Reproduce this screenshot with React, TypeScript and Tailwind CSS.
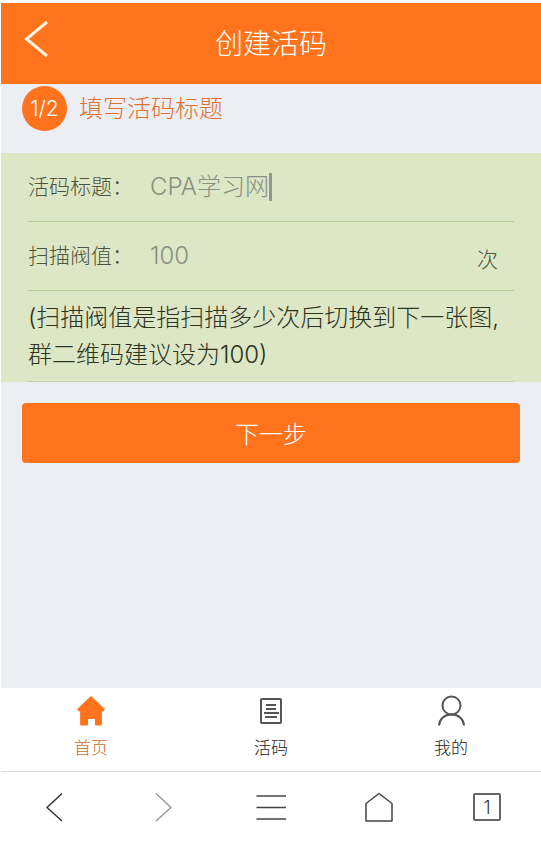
import React, { useState } from 'react';
import clsx from 'clsx';

type TabKey = 'home' | 'codes' | 'mine';

const HomeIcon = () => (
    <svg className="w-8 h-8" viewBox="0 0 32 32" fill="#ff731d" aria-hidden="true">
        <path
            d="M16 2.5 29.5 15.2 28.3 17H26.3V31H20.5V24.5H12.5V31H5.7V17H3.8L2.6 15.2Z"
            stroke="#ff731d"
            strokeWidth="1"
            strokeLinejoin="round"
        />
    </svg>
);

const CodeIcon = () => (
    <svg className="w-8 h-8" viewBox="0 0 32 32" fill="none" stroke="#555" strokeWidth="2" aria-hidden="true">
        <rect x="6" y="5" width="20" height="24" rx="1" />
        <path d="M11 11H21M11 15H21M9 19H24M10 23H22" />
    </svg>
);

const UserIcon = () => (
    <svg className="w-8 h-8" viewBox="0 0 32 32" fill="none" stroke="#555" strokeWidth="2" aria-hidden="true">
        <circle cx="16.5" cy="11.5" r="9" />
        <path d="M4 31.5C4.5 25 9.5 20.5 16.5 20.5S28.5 25 29 31.5" />
    </svg>
);

const tabs: { key: TabKey; label: string; icon: React.ReactNode }[] = [
    { key: 'home', label: '首页', icon: <HomeIcon /> },
    { key: 'codes', label: '活码', icon: <CodeIcon /> },
    { key: 'mine', label: '我的', icon: <UserIcon /> },
];

const browserButtons = [
    { label: '后退', stroke: '#333', path: 'M23 2.5 8 16.5 23 30' },
    { label: '前进', stroke: '#999', path: 'M9 2.5 24 16.5 9 30' },
    { label: '菜单', stroke: '#444', path: 'M1.5 5H31M1.5 16.5H31M1.5 28H31' },
    { label: '主页', stroke: '#444', path: 'M16 2.5 29 12.5V30H3V12.5Z' },
];

const App: React.FC = () => {
    const [title, setTitle] = useState('CPA学习网');
    const [limit, setLimit] = useState('100');
    const [activeTab, setActiveTab] = useState<TabKey>('home');

    return (
        <div className="min-h-screen flex flex-col bg-white pt-[3px] pl-px font-light font-[Inter,'Noto_Sans_CJK_SC',sans-serif]">
            <header className="grid grid-cols-[72px_1fr_72px] items-center h-[81px] bg-[#ff731d] text-white">
                <button type="button" aria-label="返回" className="pl-5 pb-2">
                    <svg className="w-8 h-10" viewBox="0 0 32 40" fill="none" stroke="#fff3df" strokeWidth="3">
                        <path d="M26 2 5.5 19 26 36" />
                    </svg>
                </button>
                <h1 className="text-center text-[28px] leading-10 font-light">创建活码</h1>
            </header>

            <main className="flex-1 bg-[#edeef3]">
                <div className="flex items-start h-[69px] px-[21px] pt-[2px]">
                    <span className="flex items-center justify-center w-[45px] h-[45px] rounded-full bg-[#ff731d] text-white text-[21px]">
                        1/2
                    </span>
                    <h2 className="ml-3 text-[24px] leading-[45px] font-light text-[#dd7232]">填写活码标题</h2>
                </div>

                <form onSubmit={(e) => e.preventDefault()}>
                    <div className="bg-[#dde7c5] px-[27px]">
                        <div className="flex items-center h-[69px] border-b border-[#b5cd93]">
                            <label htmlFor="title" className="w-[122px] text-[21px] text-[#4b5440]">
                                活码标题：
                            </label>
                            <input
                                id="title"
                                type="text"
                                value={title}
                                onChange={(e) => setTitle(e.target.value)}
                                className="field-sizing-content text-[24px] leading-9 text-[#898f82] outline-none"
                            />
                            <span className="w-[3px] h-7 bg-[#94978f]" />
                        </div>

                        <div className="flex items-center h-[69px] border-b border-[#b5cd93]">
                            <label htmlFor="limit" className="w-[122px] text-[21px] text-[#4b5440]">
                                扫描阀值：
                            </label>
                            <input
                                id="limit"
                                type="text"
                                inputMode="numeric"
                                value={limit}
                                onChange={(e) => setLimit(e.target.value)}
                                className="flex-1 min-w-0 text-[24px] leading-9 text-[#898f82] outline-none"
                            />
                            <span className="pr-4 pt-2 text-[21px] text-[#4b5440]">次</span>
                        </div>

                        <p className="py-2 text-[24px] leading-[37px] text-[#2b3321] border-b border-[#c3d2ae]">
                            (扫描阀值是指扫描多少次后切换到下一张图,
                            <br />
                            群二维码建议设为100)
                        </p>
                    </div>

                    <div className="px-[21px] pt-[21px]">
                        <button
                            type="submit"
                            className="w-full h-[60px] pt-1 rounded-sm bg-[#ff731d] text-white text-[24px] font-light"
                        >
                            下一步
                        </button>
                    </div>
                </form>
            </main>

            <nav className="grid grid-cols-3 h-[84px] border-b border-[#dcdcdc]">
                {tabs.map((tab) => (
                    <button
                        key={tab.key}
                        type="button"
                        onClick={() => setActiveTab(tab.key)}
                        className={clsx(
                            'flex flex-col items-center pt-1.5 gap-2.5 text-[17px] leading-6 font-light',
                            activeTab === tab.key ? 'text-[#cf6c24]' : 'text-[#222]'
                        )}
                    >
                        {tab.icon}
                        {tab.label}
                    </button>
                ))}
            </nav>

            {/* Browser toolbar */}
            <div className="grid grid-cols-5 h-[74px] pb-1">
                {browserButtons.map((item) => (
                    <button key={item.label} type="button" aria-label={item.label} className="flex items-center justify-center">
                        <svg className="w-8 h-8" viewBox="0 0 32 32" fill="none" stroke={item.stroke} strokeWidth="1.5" strokeLinejoin="round">
                            <path d={item.path} />
                        </svg>
                    </button>
                ))}
                <button type="button" aria-label="窗口" className="flex items-center justify-center">
                    <span className="flex items-center justify-center w-7 h-7 border-2 border-[#666] rounded-xs text-[18px] text-[#333]">
                        1
                    </span>
                </button>
            </div>
        </div>
    );
};

export default App;
